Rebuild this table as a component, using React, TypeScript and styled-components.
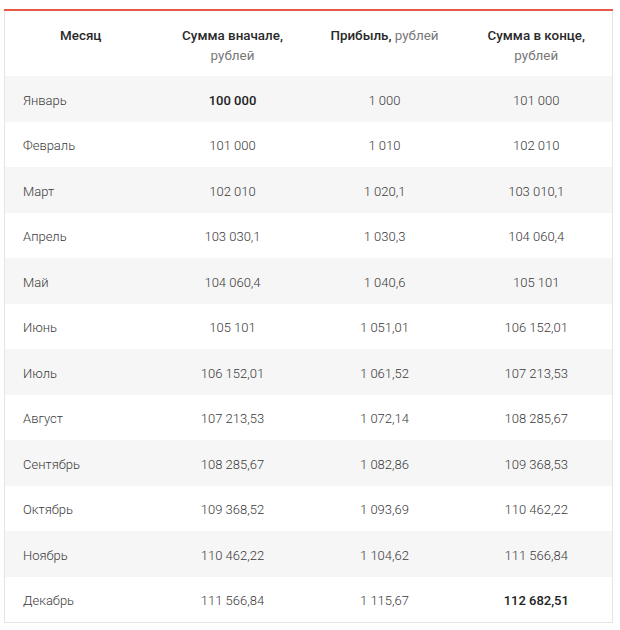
import React from "react";
import styled, { createGlobalStyle } from "styled-components";

const Global = createGlobalStyle`
  html, body { margin: 0; padding: 0; background: #ffffff; }
  body { font-family: Roboto, "Noto Sans", Arial, sans-serif; }
`;

const Page = styled.div`
  padding: 9px 8px 0 4px;
`;

const Table = styled.table`
  width: 609px;
  border-collapse: collapse;
  table-layout: fixed;
  border-top: 2px solid #e85a45;
  border-left: 1px solid #e4e4e4;
  border-right: 1px solid #e4e4e4;
  border-bottom: 1px solid #e4e4e4;
  font-size: 13px;
  color: #333333;
`;

const HeadCell = styled.th`
  font-weight: 500;
  font-size: 13.4px;
  color: #2a2a2a;
  text-align: center;
  vertical-align: top;
  padding: 15px 10px 0;
  height: 66px;
  box-sizing: border-box;
  line-height: 20px;
`;

const Unit = styled.span`
  font-weight: 400;
  color: #777777;
`;

const Row = styled.tr<{ $striped: boolean }>`
  background: ${(p) => (p.$striped ? "#f6f6f6" : "#ffffff")};
  height: 45.5px;
`;

const Cell = styled.td<{ $left?: boolean; $bold?: boolean }>`
  text-align: ${(p) => (p.$left ? "left" : "center")};
  padding: 3px 0 0 ${(p) => (p.$left ? "18px" : "0")};
  font-weight: ${(p) => (p.$bold ? 500 : 300)};
  color: ${(p) => (p.$bold ? "#222222" : "#3a3a3a")};
  vertical-align: middle;
`;

const rows: [string, string, string, string, number?, number?][] = [
  ["Январь", "100 000", "1 000", "101 000", 1],
  ["Февраль", "101 000", "1 010", "102 010"],
  ["Март", "102 010", "1 020,1", "103 010,1"],
  ["Апрель", "103 030,1", "1 030,3", "104 060,4"],
  ["Май", "104 060,4", "1 040,6", "105 101"],
  ["Июнь", "105 101", "1 051,01", "106 152,01"],
  ["Июль", "106 152,01", "1 061,52", "107 213,53"],
  ["Август", "107 213,53", "1 072,14", "108 285,67"],
  ["Сентябрь", "108 285,67", "1 082,86", "109 368,53"],
  ["Октябрь", "109 368,52", "1 093,69", "110 462,22"],
  ["Ноябрь", "110 462,22", "1 104,62", "111 566,84"],
  ["Декабрь", "111 566,84", "1 115,67", "112 682,51", 0, 1],
];

export default function App() {
  return (
    <Page>
      <Global />
      <Table>
        <thead>
          <tr>
            <HeadCell>Месяц</HeadCell>
            <HeadCell>
              Сумма вначале,
              <br />
              <Unit>рублей</Unit>
            </HeadCell>
            <HeadCell>
              Прибыль, <Unit>рублей</Unit>
            </HeadCell>
            <HeadCell>
              Сумма в конце,
              <br />
              <Unit>рублей</Unit>
            </HeadCell>
          </tr>
        </thead>
        <tbody>
          {rows.map((r, i) => (
            <Row key={r[0]} $striped={i % 2 === 0}>
              <Cell $left>{r[0]}</Cell>
              <Cell $bold={r[4] === 1}>{r[1]}</Cell>
              <Cell>{r[2]}</Cell>
              <Cell $bold={r[5] === 1}>{r[3]}</Cell>
            </Row>
          ))}
        </tbody>
      </Table>
    </Page>
  );
}
